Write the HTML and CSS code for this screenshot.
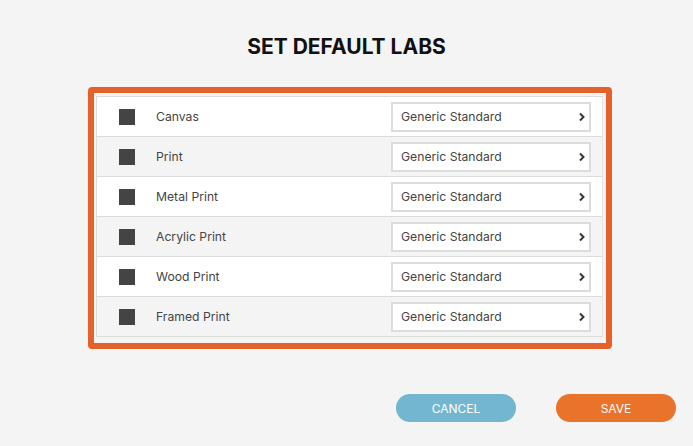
FILE: index.html
```html
<!DOCTYPE html>
<html>
<head>
<meta charset="utf-8">
<link rel="stylesheet" href="styles.css">
</head>
<body>
<div class="page">
  <h1 class="title">SET DEFAULT LABS</h1>
  <div class="frame">
    <div class="list">
      <div class="row"><span class="check"></span><span class="label">Canvas</span><div class="select"><span>Generic Standard</span><svg class="chev" viewBox="0 0 6 10" width="6" height="10"><path d="M1 1.5 L4.5 5 L1 8.5" fill="none" stroke="#333" stroke-width="2"/></svg></div></div>
      <div class="row"><span class="check"></span><span class="label">Print</span><div class="select"><span>Generic Standard</span><svg class="chev" viewBox="0 0 6 10" width="6" height="10"><path d="M1 1.5 L4.5 5 L1 8.5" fill="none" stroke="#333" stroke-width="2"/></svg></div></div>
      <div class="row"><span class="check"></span><span class="label">Metal Print</span><div class="select"><span>Generic Standard</span><svg class="chev" viewBox="0 0 6 10" width="6" height="10"><path d="M1 1.5 L4.5 5 L1 8.5" fill="none" stroke="#333" stroke-width="2"/></svg></div></div>
      <div class="row"><span class="check"></span><span class="label">Acrylic Print</span><div class="select"><span>Generic Standard</span><svg class="chev" viewBox="0 0 6 10" width="6" height="10"><path d="M1 1.5 L4.5 5 L1 8.5" fill="none" stroke="#333" stroke-width="2"/></svg></div></div>
      <div class="row"><span class="check"></span><span class="label">Wood Print</span><div class="select"><span>Generic Standard</span><svg class="chev" viewBox="0 0 6 10" width="6" height="10"><path d="M1 1.5 L4.5 5 L1 8.5" fill="none" stroke="#333" stroke-width="2"/></svg></div></div>
      <div class="row"><span class="check"></span><span class="label">Framed Print</span><div class="select"><span>Generic Standard</span><svg class="chev" viewBox="0 0 6 10" width="6" height="10"><path d="M1 1.5 L4.5 5 L1 8.5" fill="none" stroke="#333" stroke-width="2"/></svg></div></div>
    </div>
  </div>
  <div class="actions">
    <button class="btn cancel">CANCEL</button>
    <button class="btn save">SAVE</button>
  </div>
</div>
</body>
</html>
```

FILE: styles.css
```css
html, body {
  margin: 0;
  padding: 0;
  background: #f4f4f4;
}
body {
  width: 693px;
  height: 446px;
  overflow: hidden;
  font-family: Inter, "Noto Sans", sans-serif;
  color: #444;
}
.page {
  display: flex;
  flex-direction: column;
}
.title {
  margin: 34px 0 0 0;
  height: 26px;
  line-height: 26px;
  font-size: 21px;
  font-weight: 700;
  text-align: center;
  color: #111;
  letter-spacing: 0;
}
.frame {
  margin: 27px 0 0 88px;
  width: 507px;
  border: 6px solid #e4622a;
  border-radius: 4px;
  padding: 3px 3px 6px 2px;
  background: #f4f4f4;
}
.list {
  border: 1px solid #dcdcdc;
  border-bottom: none;
  border-right-color: #e4e4e4;
}
.row {
  height: 39px;
  border-bottom: 1px solid #dcdcdc;
  display: flex;
  align-items: center;
  background: #fff;
}
.row:nth-child(even) {
  background: #f4f4f4;
}
.check {
  width: 16px;
  height: 16px;
  background: #444;
  margin-left: 22px;
  flex: none;
}
.label {
  margin-left: 21px;
  font-size: 12.2px;
  color: #444;
  flex: 1;
}
.select {
  height: 26px;
  border: 2px solid #dcdcdc;
  background: #fff;
  margin-right: 11px;
  display: flex;
  align-items: center;
  justify-content: space-between;
  padding: 0 4px 0 8px;
  box-sizing: content-box;
  width: 184px;
  font-size: 12.2px;
  color: #444;
}
.chev {
  display: block;
}
.actions {
  display: flex;
  margin: 45px 0 0 396px;
  gap: 40px;
}
.btn {
  width: 120px;
  height: 28px;
  border: none;
  border-radius: 14px;
  color: #fff;
  font-family: Inter, "Noto Sans", sans-serif;
  font-size: 12px;
  padding: 0;
}
.cancel { background: #72b6cf; }
.save { background: #ea732c; }
```
